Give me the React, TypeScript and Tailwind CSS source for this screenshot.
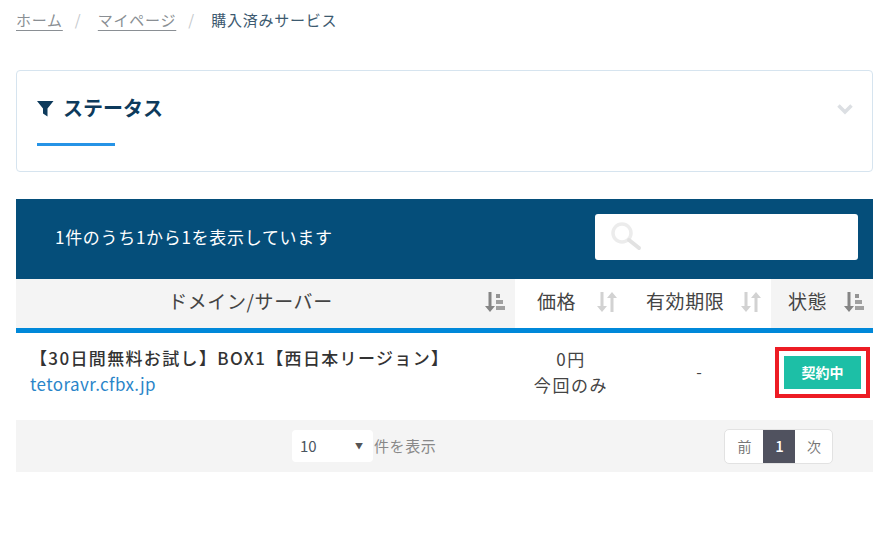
const SortActive = () => (
  <svg width="20" height="22" viewBox="0 0 20 22" className="shrink-0">
    <path d="M3.500 1h3v14H10l-5 6-5-6h3.500z" fill="#858585" />
    <rect x="11" y="3" width="4" height="4" fill="#949494" />
    <rect x="11" y="9" width="7" height="4" fill="#a0a0a0" />
    <rect x="11" y="15" width="9" height="4" fill="#a0a0a0" />
  </svg>
);
const SortIdle = () => (
  <svg width="20" height="22" viewBox="0 0 20 22" className="shrink-0">
    <path d="M3.500 1h3v14H10l-5 6-5-6h3.500z" fill="#d2d2d2" />
    <path d="M13.500 21h3V7H20l-5-6-5 6h3.500z" fill="#d2d2d2" />
  </svg>
);

const font = "font-['Noto_Sans_CJK_JP','Noto_Sans',sans-serif]";

export default function App() {
  return (
    <div className={`w-[890px] h-[538px] bg-white overflow-hidden px-4 ${font}`}>
      <nav className="flex items-center h-[40px] text-[15px] leading-[20px] tracking-[0.75px]">
        <a className="text-[#8a8f94] underline underline-offset-4">ホーム</a>
        <span className="text-[#c4c8cc] w-[35px] pl-[12px]">/</span>
        <a className="text-[#8a8f94] underline underline-offset-4">マイページ</a>
        <span className="text-[#c4c8cc] w-[35px] pl-[12px]">/</span>
        <span className="text-[#3d5a70]">購入済みサービス</span>
      </nav>

      <section className="mt-[30px] h-[102px] w-[857px] rounded border border-[#d6e4ef] flex justify-between pl-5 pr-[18px]">
        <div className="pt-5 flex flex-col">
          <div className="flex items-center gap-[9px] h-[34px]">
            <svg width="17" height="17" viewBox="0 0 17 17">
              <path d="M0 1h16.500L10.500 8.500V16.500L6 13.500V8.500z" fill="#0d3a5c" />
            </svg>
            <h2 className="text-[20px] font-bold leading-[28px] text-[#0d3a5c]">ステータス</h2>
          </div>
          <div className="mt-[18px] h-[3px] w-[78px] bg-[#2693e6]" />
        </div>
        <svg width="18" height="12" viewBox="0 0 18 12" className="mt-[32px]">
          <path d="M2.500 2.500L9 9l6.500-6.500" fill="none" stroke="#dcdfe3" strokeWidth="3.500" />
        </svg>
      </section>

      <div className="mt-[27px] w-[857px]">
        <div className="h-20 bg-[#054e7a] flex items-center justify-between pl-[39px] pr-[15px] pb-[4px]">
          <p className="text-[17px] text-white tracking-[0.7px]">1件のうち1から1を表示しています</p>
          <div className="w-[263px] h-[46px] bg-white rounded-[3px] flex items-center pl-[14px]">
            <svg width="34" height="34" viewBox="0 0 34 34">
              <circle cx="13" cy="13" r="9" fill="none" stroke="#ececec" strokeWidth="3.500" />
              <path d="M20 20l10 8" stroke="#e2e2e2" strokeWidth="4" strokeLinecap="round" />
            </svg>
          </div>
        </div>

        <div className="grid grid-cols-[499px_120px_136px_102px] h-[54px] border-b-[5px] border-[#0088d9] text-[19px] tracking-[0.6px] text-[#444]">
          <div className="bg-[#f4f4f4] flex items-center pr-[10px] pb-[4px]">
            <span className="flex-1 text-center">ドメイン/サーバー</span>
            <SortActive />
          </div>
          <div className="flex items-center pl-[22px] gap-[21px] pb-[4px]">
            <span>価格</span>
            <SortIdle />
          </div>
          <div className="flex items-center pl-[11px] gap-[17px] pb-[4px]">
            <span>有効期限</span>
            <SortIdle />
          </div>
          <div className="bg-[#f4f4f4] flex items-center pl-[17px] gap-[17px] pb-[4px]">
            <span>状態</span>
            <SortActive />
          </div>
        </div>

        <div className="grid grid-cols-[499px_120px_136px_102px] h-[87px] text-[#444]">
          <div className="pl-[14px] pt-[12px]">
            <div className="text-[17px] tracking-[1.35px] leading-[26px] font-medium text-[#333] whitespace-nowrap">【30日間無料お試し】BOX1【西日本リージョン】</div>
            <a className="block text-[17px] tracking-[0.4px] leading-[26px] text-[#2a85c9]">tetoravr.cfbx.jp</a>
          </div>
          <div className="pt-[13px] pr-[8px] text-center text-[17px] tracking-[1.6px] leading-[26px]">
            <div>0円</div>
            <div>今回のみ</div>
          </div>
          <div className="text-center pr-[8px] pt-[25px] text-[16px] leading-[26px]">-</div>
          <div className="pt-[14px] pl-[4px]">
            <div className="w-[95px] h-[51px] border-[4px] border-[#ed1c24] p-[5px]">
              <div className="h-full bg-[#1dbfa6] flex items-center justify-center text-white text-[14px] font-bold">契約中</div>
            </div>
          </div>
        </div>

        <div className="h-[52px] bg-[#f4f4f4] flex items-center text-[14px]">
          <div className="ml-[276px] w-[81px] h-8 bg-white rounded flex items-center pl-[8px] pr-[10px] justify-between text-[#4a5560] text-[15px]">
            <span>10</span>
            <span className="text-[8px] text-[#555]">▼</span>
          </div>
          <span className="ml-[1px] text-[#888] text-[15px] tracking-[0.6px]">件を表示</span>
          <div className="ml-[288px] h-[35px] flex rounded-[5px] border border-[#e2e2e2] overflow-hidden bg-white text-[14px]">
            <span className="w-[38px] flex items-center justify-center text-[#777]">前</span>
            <span className="w-8 flex items-center justify-center bg-[#50525f] text-white font-medium text-[15px]">1</span>
            <span className="w-[37px] flex items-center justify-center text-[#777]">次</span>
          </div>
        </div>
      </div>
    </div>
  );
}
